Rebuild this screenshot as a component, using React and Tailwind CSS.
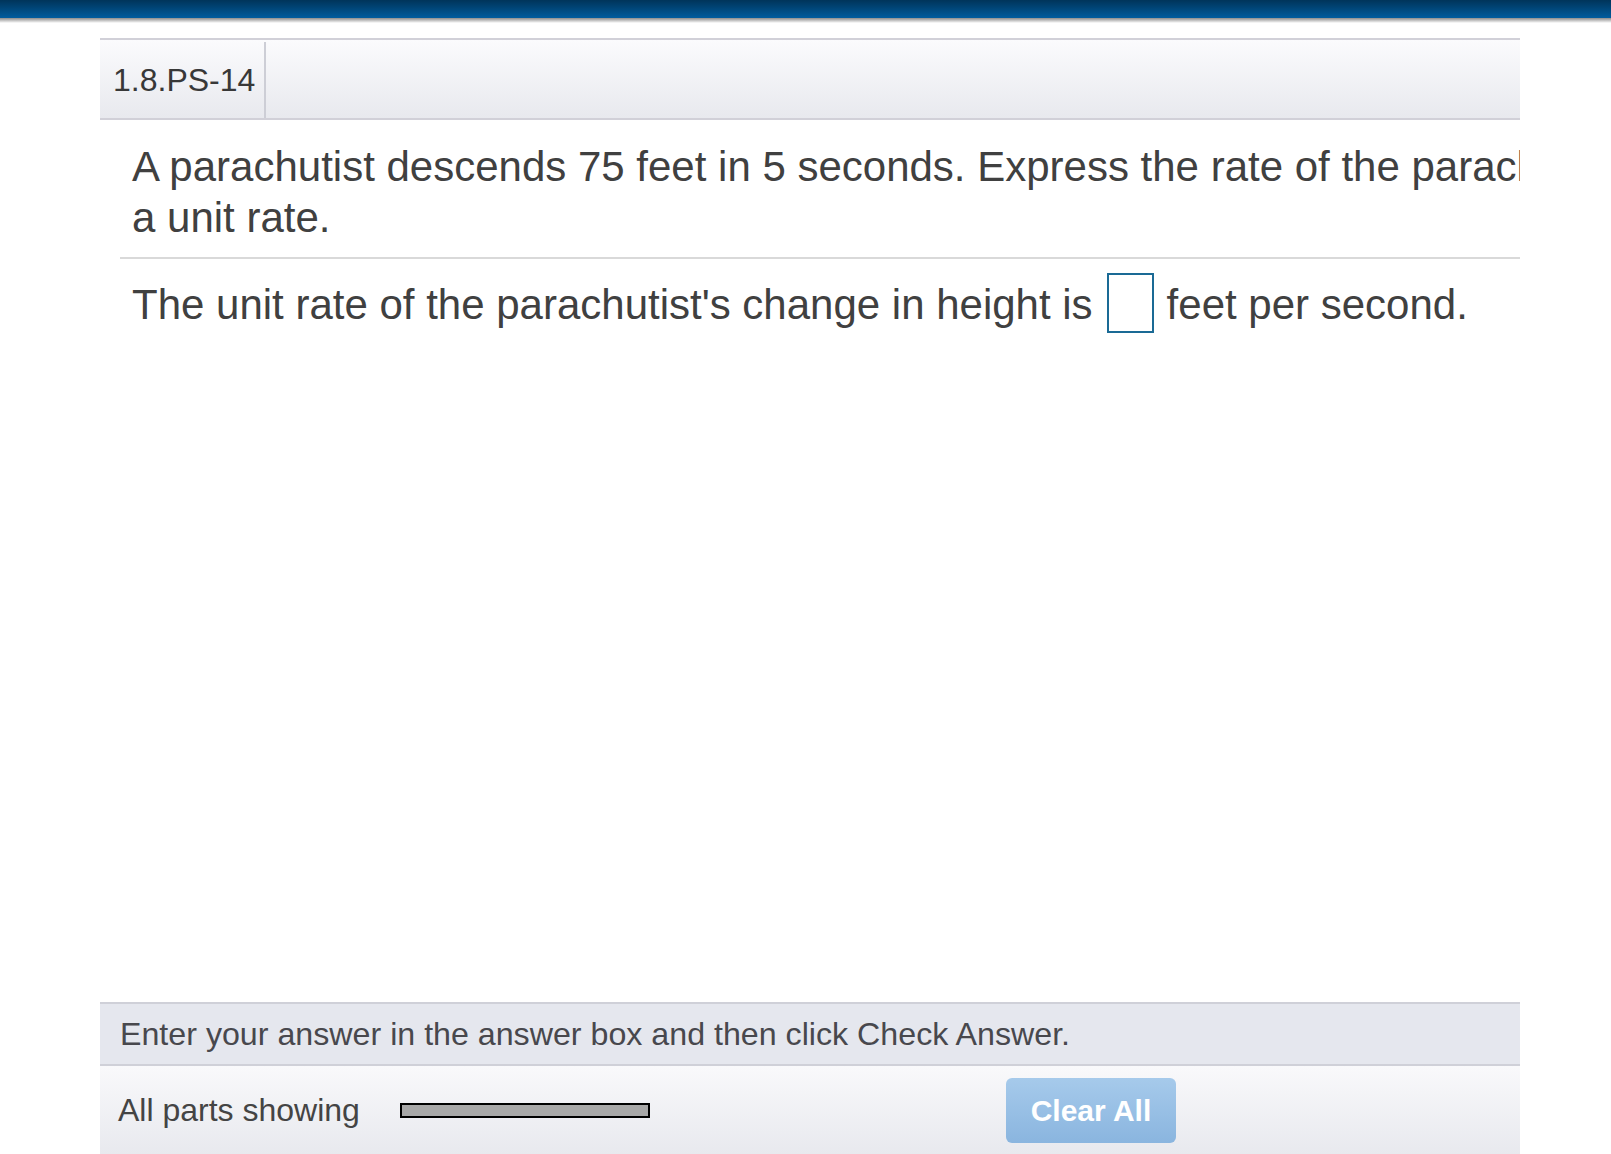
import React from 'react';

const FONT = "font-['Liberation_Sans',Arial,Helvetica,sans-serif]";

const App = () => {
  return (
    <div className={`h-[1154px] w-full flex flex-col overflow-hidden bg-white ${FONT}`}>
      {/* Top bar */}
      <div className="h-[18px] bg-gradient-to-b from-[#00345a] to-[#005c9e]" />
      <div className="h-[5px] bg-gradient-to-b from-[#8c8c8c] to-white" />
      <div className="h-[15px]" />

      {/* Panel */}
      <div className="ml-[100px] w-[1420px] flex-1 flex flex-col min-h-0">
        {/* Header */}
        <div className="h-[82px] flex border-y-2 border-[#d1d0d8] bg-gradient-to-b from-[#fbfbfd] to-[#e8e9ee]">
          <div className="w-[166px] mt-[2px] border-r-2 border-[#cdced6] flex items-center pl-[13px] text-[32px] text-[#383838]">
            1.8.PS-14
          </div>
        </div>

        {/* Question (first line runs past the panel and is clipped, as in the app) */}
        <div className="flex-1 overflow-hidden text-[#404040]">
          <div className="pl-[32px] pt-[21px] pb-[14px] text-[42px] leading-[51px] whitespace-nowrap">
            <div>A parachutist descends 75 feet in 5 seconds. Express the rate of the parachutist's change in height as</div>
            <div>a unit rate.</div>
          </div>
          <div className="ml-[20px] h-[2px] bg-[#d9d9d9]" />
          <div className="pl-[32px] pt-[14px] flex items-center text-[42px] leading-[51px] whitespace-nowrap">
            <span className="pt-[3px]">The unit rate of the parachutist's change in height is</span>
            <span className="ml-[14px] w-[47px] h-[60px] border-2 border-[#1a6a95] bg-white" />
            <span className="ml-[13px] pt-[3px]">feet per second.</span>
          </div>
        </div>

        {/* Instruction bar */}
        <div className="h-[64px] flex items-center pl-[20px] border-y-2 border-[#cfd0d8] bg-[#e5e7ee] text-[32.2px] text-[#48484d] whitespace-nowrap">
          Enter your answer in the answer box and then click Check Answer.
        </div>

        {/* Footer */}
        <div className="h-[88px] flex items-center pl-[18px] bg-gradient-to-b from-[#f9f9fb] to-[#e8e9ee]">
          <span className="w-[244px] text-[32px] text-[#444] whitespace-nowrap">All parts showing</span>
          <div className="ml-[38px] w-[250px] h-[15px] border-2 border-black bg-[#a8a8a8]" />
          <button className="ml-[356px] w-[170px] h-[65px] rounded-[6px] bg-gradient-to-b from-[#a6caeb] to-[#8ab5df] text-white font-bold text-[30px]">
            Clear All
          </button>
        </div>
      </div>
    </div>
  );
};

export default App;
